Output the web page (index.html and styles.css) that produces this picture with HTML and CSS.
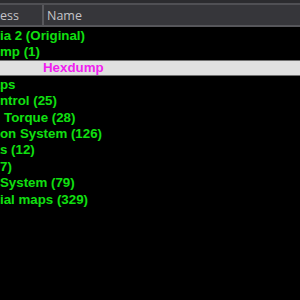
FILE: index.html
```html
<!DOCTYPE html>
<html>
<head>
<meta charset="utf-8">
<link rel="stylesheet" href="styles.css">
</head>
<body>
<div class="view">
  <div class="header">
    <div class="col col-addr"><span class="pre">Addr</span><span>ess</span></div>
    <div class="sep"></div>
    <div class="col col-name">Name</div>
  </div>
  <div class="rows">
    <div class="row"><span class="pre">Skoda Octav</span><span>ia 2 (Original)</span></div>
    <div class="row"><span class="pre">Hexdu</span><span>mp (1)</span></div>
    <div class="row selected"><span class="sel-text">Hexdump</span></div>
    <div class="row"><span class="pre">Ma</span><span>ps</span></div>
    <div class="row"><span class="pre">Boost co</span><span>ntrol (25)</span></div>
    <div class="row"><span class="pre">Driver</span><span class="sp">Torque (28)</span></div>
    <div class="row"><span class="pre">Igniti</span><span>on System (126)</span></div>
    <div class="row"><span class="pre">Lambda</span><span>s (12)</span></div>
    <div class="row"><span class="pre">Limiters (</span><span>7)</span></div>
    <div class="row"><span class="pre">Fuel </span><span>System (79)</span></div>
    <div class="row"><span class="pre">Potent</span><span>ial maps (329)</span></div>
  </div>
</div>
</body>
</html>
```
FILE: styles.css
```css
html, body {
  margin: 0;
  padding: 0;
  background: #000;
}
.view {
  width: 300px;
  height: 300px;
  overflow: hidden;
  background: #000;
  display: flex;
  flex-direction: column;
}
.header {
  height: 22px;
  border-top: 3px solid #2c2c2f;
  box-shadow: inset 0 2px 0 #505054;
  border-bottom: 2px solid #56565a;
  background: #36363a;
  display: flex;
  align-items: stretch;
  font-family: "Open Sans", "Noto Sans", sans-serif;
  font-size: 12.5px;
  color: #c4c4c8;
}
.col {
  display: flex;
  align-items: center;
  white-space: nowrap;
  padding-top: 2px;
}
.col-addr {
  width: 42px;
  overflow: hidden;
}
.sep {
  width: 2px;
  background: #58585c;
  margin-top: 2px;
}
.col-name {
  padding-left: 3px;
}
.pre {
  width: 0;
  display: flex;
  justify-content: flex-end;
  white-space: pre;
}
.rows {
  display: flex;
  flex-direction: column;
  font-family: "Liberation Sans", Arial, sans-serif;
  font-weight: bold;
  font-size: 13.3px;
  color: #10e010;
}
.row {
  height: 16.4px;
  display: flex;
  align-items: center;
  white-space: pre;
  overflow: hidden;
}
.sp {
  padding-left: 4px;
}
.selected {
  background: #e0e0e0;
  box-shadow: inset 0 1px 0 #707070, inset 0 -1px 0 #707070;
}
.sel-text {
  padding-left: 43px;
  color: #f020f0;
}
```
